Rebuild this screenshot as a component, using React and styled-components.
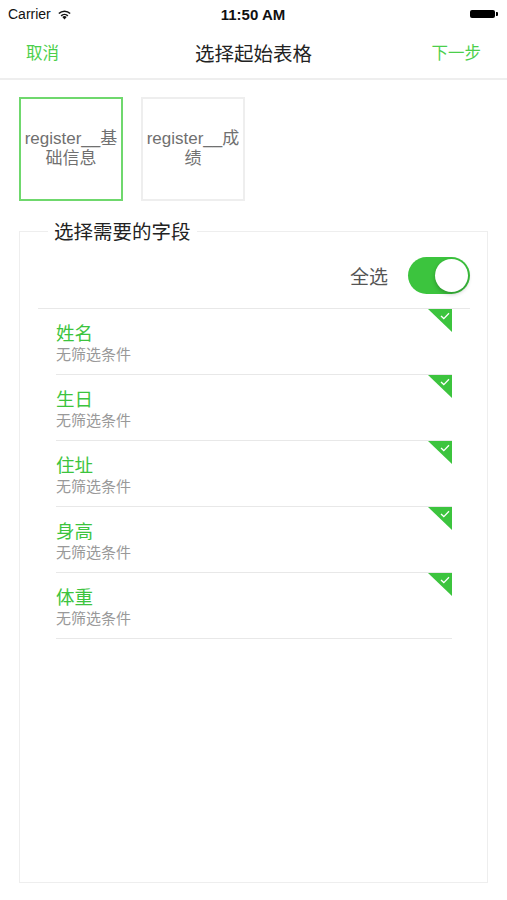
import React, { useState } from "react";
import styled, { createGlobalStyle } from "styled-components";

const GREEN = "#3cc43e";

const GlobalStyle = createGlobalStyle`
  html, body {
    margin: 0;
    padding: 0;
    background: #fff;
  }
  body {
    font-family: "Liberation Sans", "Noto Sans CJK SC", sans-serif;
    color: #222;
  }
  * {
    box-sizing: border-box;
  }
`;

const tables = [
  { id: 1, name: "register__基础信息" },
  { id: 2, name: "register__成绩" },
];

const fields = ["姓名", "生日", "住址", "身高", "体重"];

const App = () => {
  const [selected, setSelected] = useState(1);
  const [allOn, setAllOn] = useState(true);

  return (
    <>
      <GlobalStyle />
      <Page>
        <StatusBar>
          <Carrier>
            Carrier
            <svg width="15" height="11" viewBox="0 0 15 11">
              <path d="M7.5 10.5 L5.3 8.1 A3.2 3.2 0 0 1 9.7 8.1 Z" fill="#111" />
              <path d="M3.6 6.3 A5.6 5.6 0 0 1 11.4 6.3 L10.3 7.4 A4.1 4.1 0 0 0 4.7 7.4 Z" fill="#111" />
              <path d="M1.3 4 A8.9 8.9 0 0 1 13.7 4 L12.6 5.1 A7.3 7.3 0 0 0 2.4 5.1 Z" fill="#111" />
            </svg>
          </Carrier>
          <Clock>11:50 AM</Clock>
          <Battery>
            <BatteryBody />
            <BatteryTip />
          </Battery>
        </StatusBar>

        <NavBar>
          <NavAction>取消</NavAction>
          <NavTitle>选择起始表格</NavTitle>
          <NavAction $right>下一步</NavAction>
        </NavBar>

        <Content>
          <TableList>
            {tables.map(t => (
              <TableCard
                key={t.id}
                $active={selected === t.id}
                onClick={() => setSelected(t.id)}
              >
                {t.name}
              </TableCard>
            ))}
          </TableList>

          <FieldGroup>
            <GroupLegend>选择需要的字段</GroupLegend>
            <SelectAllRow>
              <SelectAllLabel>全选</SelectAllLabel>
              <Switch $on={allOn} onClick={() => setAllOn(!allOn)}>
                <Knob $on={allOn} />
              </Switch>
            </SelectAllRow>
            <FieldList>
              {fields.map(f => (
                <FieldItem key={f}>
                  <FieldName>{f}</FieldName>
                  <FieldSub>无筛选条件</FieldSub>
                  <CheckCorner>
                    <svg width="10" height="8" viewBox="0 0 10 8">
                      <path
                        d="M1 4 L3.8 6.6 L9 1.2"
                        fill="none"
                        stroke="#fff"
                        strokeWidth="1.3"
                      />
                    </svg>
                  </CheckCorner>
                </FieldItem>
              ))}
            </FieldList>
          </FieldGroup>
        </Content>
      </Page>
    </>
  );
};

const Page = styled.div`
  width: 507px;
  height: 900px;
  display: flex;
  flex-direction: column;
  background: #fff;
`;

const StatusBar = styled.div`
  height: 28px;
  display: grid;
  grid-template-columns: 1fr auto 1fr;
  align-items: center;
  padding: 0 9px 0 8px;
`;

const Carrier = styled.div`
  display: flex;
  align-items: center;
  gap: 6px;
  font-size: 14px;
  color: #111;
`;

const Clock = styled.div`
  font-size: 15px;
  font-weight: 700;
  color: #111;
`;

const Battery = styled.div`
  justify-self: end;
  display: flex;
  align-items: center;
`;

const BatteryBody = styled.div`
  width: 25px;
  height: 8px;
  border-radius: 2px;
  background: #000;
`;

const BatteryTip = styled.div`
  width: 2px;
  height: 4px;
  margin-left: 1px;
  background: #000;
  border-radius: 0 1px 1px 0;
`;

const NavBar = styled.div`
  height: 52px;
  display: grid;
  grid-template-columns: 1fr auto 1fr;
  align-items: center;
  padding: 0 26px 2px 26px;
  border-bottom: 2px solid #eeeeee;
`;

const NavAction = styled.span`
  justify-self: ${p => (p.$right ? "end" : "start")};
  font-size: 16.5px;
  color: #4bcf4b;
  font-family: "Noto Sans CJK SC", sans-serif;
`;

const NavTitle = styled.span`
  font-size: 19.5px;
  color: #222;
  font-family: "Noto Sans CJK SC", sans-serif;
`;

const Content = styled.div`
  padding: 17px 19px 0 19px;
  display: flex;
  flex-direction: column;
`;

const TableList = styled.div`
  display: flex;
  gap: 18px;
`;

const TableCard = styled.div`
  width: 104px;
  height: 104px;
  display: flex;
  align-items: center;
  justify-content: center;
  text-align: center;
  padding: 0 2px;
  font-size: 17px;
  line-height: 20px;
  color: #707070;
  word-break: break-all;
  border: ${p => (p.$active ? `2px solid #6fd86d` : `2px solid #eeeeee`)};
  cursor: pointer;
`;

const FieldGroup = styled.fieldset`
  margin: 19px 0 0 0;
  padding: 0;
  height: 663px;
  border: 1px solid #eeeeee;
  min-width: 0;
`;

const GroupLegend = styled.legend`
  margin-left: 28px;
  padding: 0 6px;
  font-size: 19.5px;
  line-height: 22px;
  color: #222;
  font-family: "Noto Sans CJK SC", sans-serif;
`;

const SelectAllRow = styled.div`
  display: flex;
  align-items: center;
  justify-content: flex-end;
  gap: 20px;
  margin: 0 17px 0 18px;
  padding: 15px 0 14px;
  border-bottom: 1px solid #e8e8e8;
`;

const SelectAllLabel = styled.span`
  font-size: 19px;
  color: #555;
  font-family: "Noto Sans CJK SC", sans-serif;
`;

const Switch = styled.div`
  position: relative;
  width: 62px;
  height: 37px;
  border-radius: 19px;
  background: ${p => (p.$on ? GREEN : "#e5e5e5")};
  cursor: pointer;
`;

const Knob = styled.div`
  position: absolute;
  top: 2px;
  left: ${p => (p.$on ? "27px" : "2px")};
  width: 33px;
  height: 33px;
  border-radius: 50%;
  background: #fff;
  box-shadow: 0 2px 4px rgba(0, 0, 0, 0.25);
`;

const FieldList = styled.ul`
  list-style: none;
  margin: 0 35px 0 36px;
  padding: 0;
`;

const FieldItem = styled.li`
  position: relative;
  height: 66px;
  padding-top: 12px;
  border-bottom: 1px solid #e8e8e8;
  display: flex;
  flex-direction: column;
  gap: 1px;
`;

const FieldName = styled.div`
  font-size: 18.5px;
  line-height: 23px;
  color: ${GREEN};
  font-family: "Noto Sans CJK SC", sans-serif;
`;

const FieldSub = styled.div`
  font-size: 15px;
  line-height: 18px;
  color: #999;
  font-family: "Noto Sans CJK SC", sans-serif;
`;

const CheckCorner = styled.div`
  position: absolute;
  top: 0;
  right: 0;
  width: 24px;
  height: 23px;
  background: ${GREEN};
  clip-path: polygon(0 0, 100% 0, 100% 100%);
  display: flex;
  justify-content: flex-end;
  padding: 3px 2px 0 0;

  svg {
    display: block;
  }
`;

export default App;
